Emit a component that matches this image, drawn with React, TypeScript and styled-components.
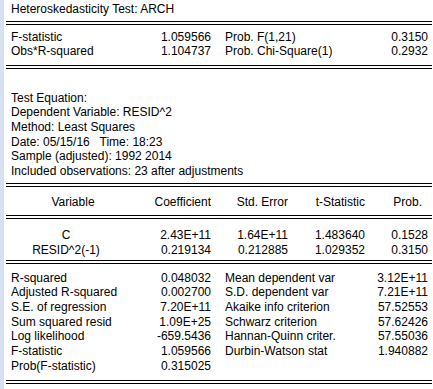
import React from 'react';
import styled, { createGlobalStyle } from 'styled-components';

const GlobalStyle = createGlobalStyle`
  html, body {
    margin: 0;
    padding: 0;
    background: #fff;
  }
  body {
    font-family: "Liberation Sans", Arial, sans-serif;
    font-size: 12px;
    color: #000;
  }
`;

const Window = styled.div`
  display: flex;
  width: 433px;
  height: 389px;
  overflow: hidden;
  background: #fff;
`;

const Gutter = styled.div`
  flex: none;
  width: 4px;
  background: #d5e0f1;
`;

const Output = styled.div`
  flex: 1;
  padding: 2px 1px 0 2px;
  line-height: 14.7px;
  white-space: pre;
`;

const Title = styled.div`
  padding-left: 5px;
`;

const Rule = styled.div<{ $above: number; $below: number }>`
  height: 4px;
  box-sizing: border-box;
  border-top: 1px solid #000;
  border-bottom: 1px solid #000;
  margin: ${p => p.$above}px 0 ${p => p.$below}px;
`;

const Grid = styled.div<{ $cols: string }>`
  display: grid;
  grid-template-columns: ${p => p.$cols};
  padding-right: 4px;
`;

const Cell = styled.div<{ $align?: 'left' | 'right' | 'center'; $pad?: string }>`
  text-align: ${p => p.$align || 'left'};
  padding: ${p => p.$pad || '0'};
  overflow: hidden;
`;

const Info = styled.div`
  padding-left: 5px;
`;

const statCols = '120px 85px 130px 1fr';
const coefCols = '120px 85px 77px 77px 1fr';

type Pair = [string, string, string, string];

const topStats: Pair[] = [
  ['F-statistic', '1.059566', 'Prob. F(1,21)', '0.3150'],
  ['Obs*R-squared', '1.104737', 'Prob. Chi-Square(1)', '0.2932'],
];

const equation = [
  'Test Equation:',
  'Dependent Variable: RESID^2',
  'Method: Least Squares',
  'Date: 05/15/16   Time: 18:23',
  'Sample (adjusted): 1992 2014',
  'Included observations: 23 after adjustments',
];

const coefs = [
  ['C', '2.43E+11', '1.64E+11', '1.483640', '0.1528'],
  ['RESID^2(-1)', '0.219134', '0.212885', '1.029352', '0.3150'],
];

const summary: Pair[] = [
  ['R-squared', '0.048032', 'Mean dependent var', '3.12E+11'],
  ['Adjusted R-squared', '0.002700', 'S.D. dependent var', '7.21E+11'],
  ['S.E. of regression', '7.20E+11', 'Akaike info criterion', '57.52553'],
  ['Sum squared resid', '1.09E+25', 'Schwarz criterion', '57.62426'],
  ['Log likelihood', '-659.5436', 'Hannan-Quinn criter.', '57.55036'],
  ['F-statistic', '1.059566', 'Durbin-Watson stat', '1.940882'],
  ['Prob(F-statistic)', '0.315025', '', ''],
];

const StatRows = ({ rows }: { rows: Pair[] }) => (
  <Grid $cols={statCols}>
    {rows.map((r, i) => (
      <React.Fragment key={i}>
        <Cell $pad="0 0 0 5px">{r[0]}</Cell>
        <Cell $align="right">{r[1]}</Cell>
        <Cell $pad="0 0 0 14px">{r[2]}</Cell>
        <Cell $align="right">{r[3] || '\u00a0'}</Cell>
      </React.Fragment>
    ))}
  </Grid>
);

const App = () => {
  return (
    <>
      <GlobalStyle />
      <Window>
        <Gutter />
        <Output>
          <Title>Heteroskedasticity Test: ARCH</Title>
          <Rule $above={4.3} $below={4.5} />
          <StatRows rows={topStats} />
          <Rule $above={6.1} $below={21.6} />
          {equation.map(line => (
            <Info key={line}>{line}</Info>
          ))}
          <Rule $above={4.2} $below={7.5} />
          <Grid $cols={coefCols}>
            <Cell $align="center" $pad="0 0 0 14px">Variable</Cell>
            <Cell $align="right">Coefficient</Cell>
            <Cell $align="right">Std. Error</Cell>
            <Cell $align="right">t-Statistic</Cell>
            <Cell $align="right" $pad="0 6px 0 0">Prob.</Cell>
          </Grid>
          <Rule $above={5.8} $below={8.8} />
          <Grid $cols={coefCols}>
            {coefs.map(row => (
              <React.Fragment key={row[0]}>
                <Cell $align="center">{row[0]}</Cell>
                <Cell $align="right">{row[1]}</Cell>
                <Cell $align="right">{row[2]}</Cell>
                <Cell $align="right">{row[3]}</Cell>
                <Cell $align="right">{row[4]}</Cell>
              </React.Fragment>
            ))}
          </Grid>
          <Rule $above={2.8} $below={6.5} />
          <StatRows rows={summary} />
          <Rule $above={6.6} $below={0} />
        </Output>
      </Window>
    </>
  );
};

export default App;
